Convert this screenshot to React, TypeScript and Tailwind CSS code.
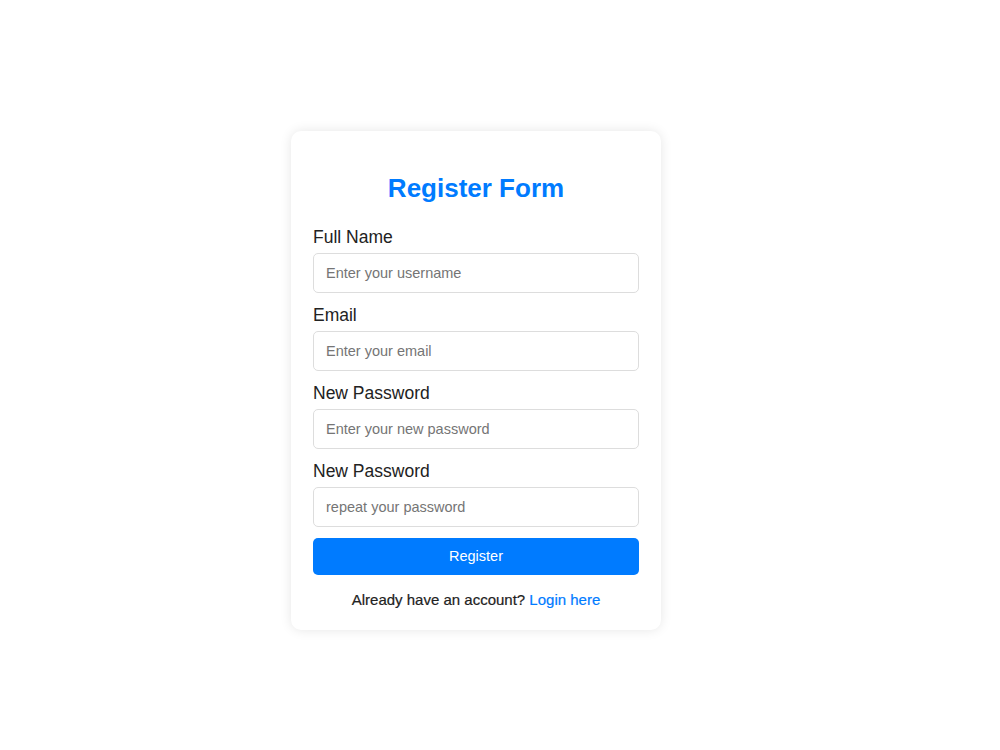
import React, { useState } from 'react';

const fields = [
  { label: 'Full Name', type: 'text', placeholder: 'Enter your username' },
  { label: 'Email', type: 'email', placeholder: 'Enter your email' },
  { label: 'New Password', type: 'password', placeholder: 'Enter your new password' },
  { label: 'New Password', type: 'password', placeholder: 'repeat your password' },
];

export default function App() {
  const [values, setValues] = useState<string[]>(['', '', '', '']);

  return (
    <div className="flex h-[750px] items-center justify-center bg-white pr-[48px] pt-[11px] font-['Liberation_Sans',Arial,sans-serif]">
      <form
        onSubmit={(e) => e.preventDefault()}
        className="w-[370px] rounded-[10px] bg-white px-[22px] pt-[22px] pb-[22px] shadow-[0_0_12px_rgba(0,0,0,0.1)]"
      >
        <h2 className="mt-[20px] mb-[23px] text-center text-[26px] leading-[30px] font-bold text-[#007bff]">
          Register Form
        </h2>
        {fields.map((f, i) => (
          <div key={i}>
            <label className="mb-[5px] block text-[17.5px] leading-[22px] text-[#222]">{f.label}</label>
            <input
              type={f.type}
              placeholder={f.placeholder}
              value={values[i]}
              onChange={(e) => {
                const next = [...values];
                next[i] = e.target.value;
                setValues(next);
              }}
              className="mb-[11px] block h-[40px] w-full rounded-[5px] border border-[#ddd] px-[12px] text-[14.5px] text-[#222] placeholder:text-[#757575] outline-none"
            />
          </div>
        ))}
        <button
          type="submit"
          className="block h-[37px] w-full rounded-[5px] bg-[#007bff] text-[14.5px] text-white"
        >
          Register
        </button>
        <p className="mt-[16px] text-center text-[15px] leading-[17px] text-[#222] [-webkit-text-stroke:0.2px_#222]">
          Already have an account?{' '}
          <a href="#" className="text-[#007bff] [-webkit-text-stroke:0.2px_#007bff]">
            Login here
          </a>
        </p>
      </form>
    </div>
  );
}
